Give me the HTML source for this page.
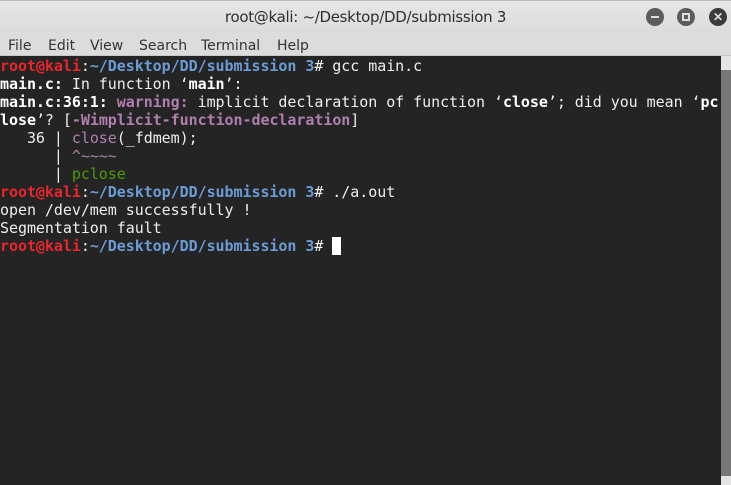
<!DOCTYPE html>
<html><head><meta charset="utf-8"><style>
*{margin:0;padding:0;box-sizing:border-box}
body{width:731px;height:485px;overflow:hidden;background:#242424;position:relative;font-family:"DejaVu Sans Mono","Liberation Mono",monospace}
#title{position:absolute;left:0;top:0;width:731px;height:33px;background:linear-gradient(#e6e6e6,#dcdcdc);border-top:1px solid #bbb;text-align:center;font:15px "DejaVu Sans","Liberation Sans",sans-serif;color:#2e2e2e;line-height:33px;letter-spacing:-0.3px}
.b{position:absolute;top:8px;width:18px;height:18px;border-radius:50%;background:#5c5c5c}
#menu{position:absolute;left:0;top:33px;width:731px;height:23px;background:#dcdcdc;border-bottom:1px solid #c8c8c8;font:14px "DejaVu Sans","Liberation Sans",sans-serif;color:#333;line-height:23px}
#menu span{position:absolute;top:2px}
#term{position:absolute;left:0;top:57px;width:721px;font-size:15px;line-height:18px;color:#eee;white-space:pre;letter-spacing:-0.05px}
.r{color:#e8262b;font-weight:bold}.bl{color:#6b9cd6;font-weight:bold}.w{font-weight:bold;color:#fff}.m{color:#b07fb0;font-weight:bold}.mm{color:#b07fb0}.g{color:#4e9a06}
#sb{position:absolute;left:721px;top:56px;width:10px;height:429px;background:#777}
</style></head><body>
<div id="title">root@kali: ~/Desktop/DD/submission 3</div>
<div class="b" style="left:646px"><div style="position:absolute;left:5px;top:8px;width:8px;height:2px;background:#ddd"></div></div>
<div class="b" style="left:677px"><div style="position:absolute;left:5px;top:5px;width:8px;height:8px;border:2px solid #ddd"></div></div>
<div class="b" style="left:709px;background:#3c3c3c;color:#ddd;font:bold 12px sans-serif;text-align:center;line-height:18px">✕</div>
<div id="menu"><span style="left:8px">File</span><span style="left:48px">Edit</span><span style="left:90px">View</span><span style="left:139px">Search</span><span style="left:201px">Terminal</span><span style="left:277px">Help</span></div>
<div id="term"><span class="r">root@kali</span>:<span class="bl">~/Desktop/DD/submission 3</span># gcc main.c
<span class="w">main.c:</span> In function ‘<span class="w">main</span>’:
<span class="w">main.c:36:1:</span> <span class="m">warning: </span>implicit declaration of function ‘<span class="w">close</span>’; did you mean ‘<span class="w">pc</span>
<span class="w">lose</span>’? [<span class="m">-Wimplicit-function-declaration</span>]
   36 | <span class="mm">close</span>(_fdmem);
      | <span class="mm">^~~~~</span>
      | <span class="g">pclose</span>
<span class="r">root@kali</span>:<span class="bl">~/Desktop/DD/submission 3</span># ./a.out
open /dev/mem successfully !
Segmentation fault
<span class="r">root@kali</span>:<span class="bl">~/Desktop/DD/submission 3</span># <span style="background:#fff"> </span></div>
<div id="sb"><div style="height:14px;background:#e4e4e4"></div><div style="position:absolute;bottom:0;width:10px;height:9px;background:#e4e4e4"></div></div>
</body></html>
